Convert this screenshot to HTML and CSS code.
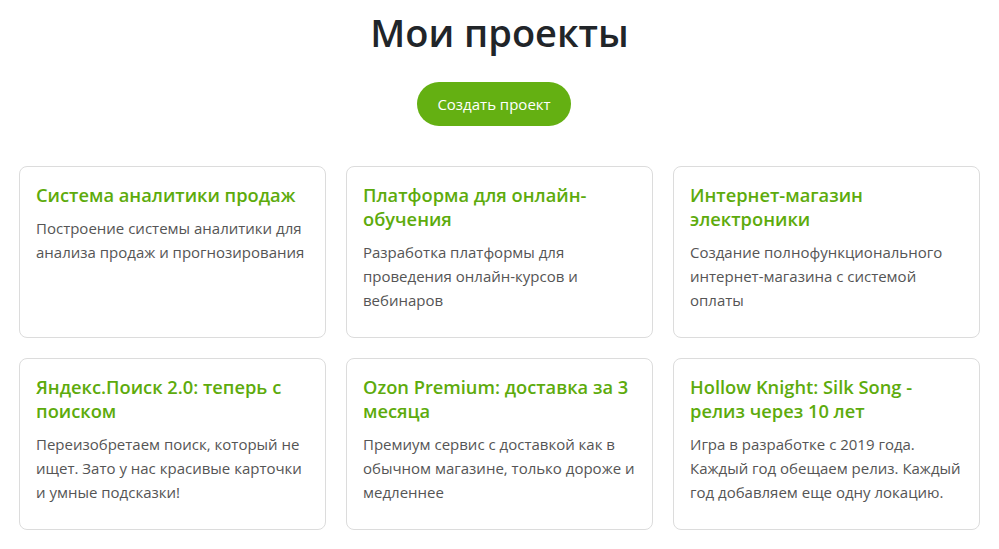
FILE: index.html
```html
<!DOCTYPE html>
<html lang="ru">
<head>
<meta charset="utf-8">
<title>Мои проекты</title>
<link rel="stylesheet" href="styles.css">
</head>
<body>
<div class="page">
  <h1 class="page-title">Мои проекты</h1>
  <div class="actions">
    <button class="btn-create">Создать проект</button>
  </div>
  <div class="grid">
    <div class="card">
      <h3 class="card-title">Система аналитики продаж</h3>
      <p class="card-text">Построение системы аналитики для анализа продаж и прогнозирования</p>
    </div>
    <div class="card">
      <h3 class="card-title">Платформа для онлайн-обучения</h3>
      <p class="card-text">Разработка платформы для проведения онлайн-курсов и вебинаров</p>
    </div>
    <div class="card">
      <h3 class="card-title">Интернет-магазин электроники</h3>
      <p class="card-text">Создание полнофункционального интернет-магазина с системой оплаты</p>
    </div>
    <div class="card">
      <h3 class="card-title">Яндекс.Поиск 2.0: теперь с поиском</h3>
      <p class="card-text">Переизобретаем поиск, который не ищет. Зато у нас красивые карточки и умные подсказки!</p>
    </div>
    <div class="card">
      <h3 class="card-title">Ozon Premium: доставка за 3 месяца</h3>
      <p class="card-text">Премиум сервис с доставкой как в обычном магазине, только дороже и медленнее</p>
    </div>
    <div class="card">
      <h3 class="card-title">Hollow Knight: Silk Song - релиз через 10 лет</h3>
      <p class="card-text">Игра в разработке с 2019 года. Каждый год обещаем релиз. Каждый год добавляем еще одну локацию.</p>
    </div>
  </div>
</div>
</body>
</html>
```

FILE: styles.css
```css
* { box-sizing: border-box; }
html, body { margin: 0; background: #fff; }
body {
  font-family: "Open Sans", "Noto Sans", "Liberation Sans", sans-serif;
  color: #212529;
}
.page {
  max-width: 961px;
  margin: 0 auto;
  padding-top: 8px;
}
.page-title {
  margin: 0;
  text-align: center;
  font-size: 38px;
  line-height: 48px;
  font-weight: 600;
  color: #212529;
}
.actions {
  display: flex;
  justify-content: center;
  margin-top: 26px;
  padding-right: 11px;
}
.btn-create {
  height: 44px;
  padding: 0 20px;
  border: none;
  border-radius: 22px;
  background: #64b012;
  color: #fff;
  font-family: inherit;
  font-size: 15px;
}
.grid {
  display: grid;
  grid-template-columns: repeat(3, 1fr);
  gap: 20px;
  margin-top: 40px;
}
.card {
  border: 1px solid #dcdcdc;
  border-radius: 8px;
  padding: 16px 16px 24px;
  min-height: 172px;
}
.card-title {
  margin: 0 0 9px;
  font-size: 18.3px;
  line-height: 24px;
  font-weight: 600;
  color: #5dab0c;
}
.card-text {
  margin: 0;
  font-size: 15px;
  line-height: 24px;
  color: #555;
}
```
